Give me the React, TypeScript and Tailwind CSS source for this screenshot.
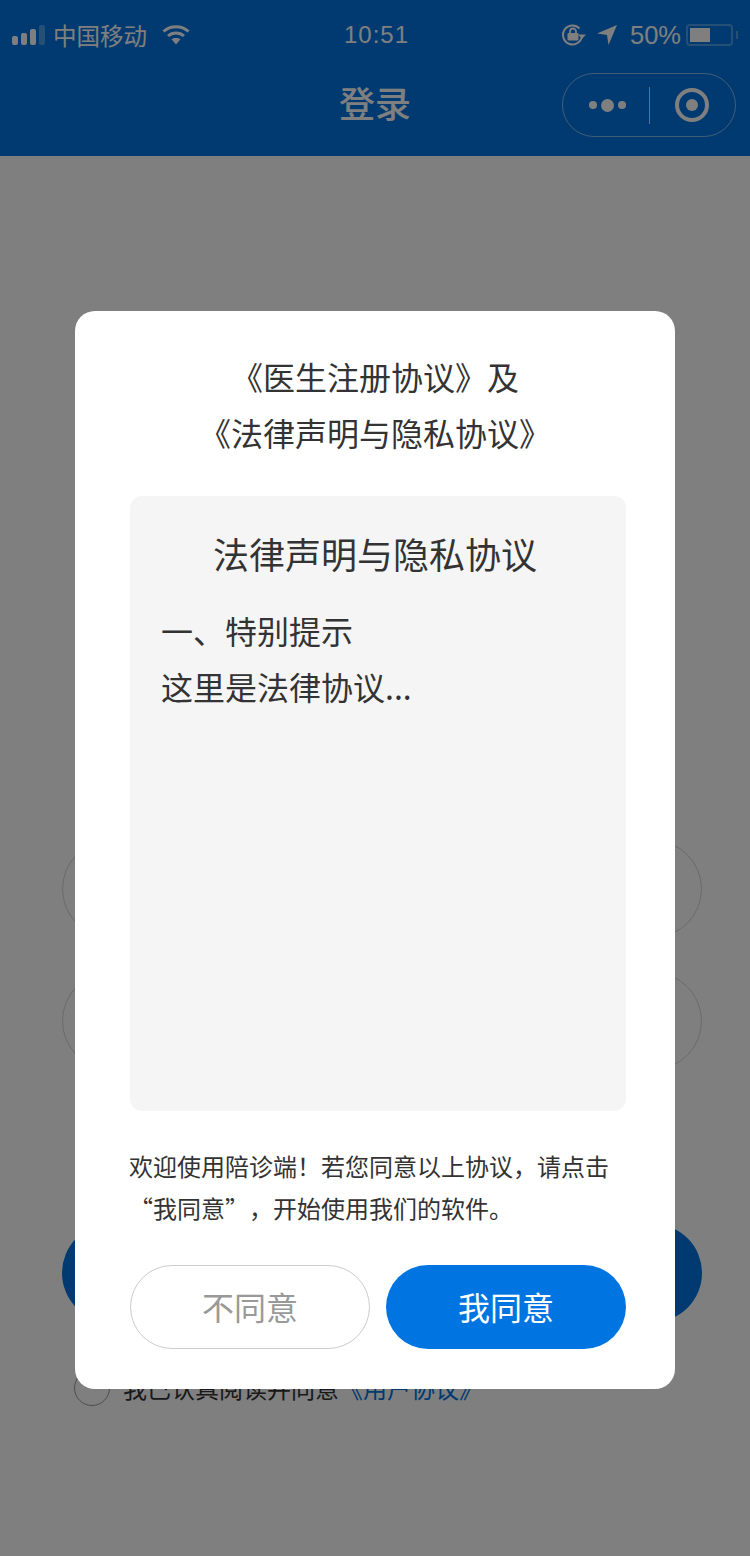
import React from "react";

const cjk = "font-['Noto_Sans_CJK_SC','Liberation_Sans',sans-serif]";

function SignalBars() {
  return (
    <div className="flex items-end gap-[3px]">
      <div className="h-[9px] w-[6px] rounded-[2px] bg-white" />
      <div className="h-[12px] w-[6px] rounded-[2px] bg-white" />
      <div className="h-[16px] w-[6px] rounded-[2px] bg-white" />
      <div className="h-[20px] w-[6px] rounded-[2px] bg-white/30" />
    </div>
  );
}

function WifiIcon() {
  return (
    <svg width="28" height="21" viewBox="0 0 28 21" aria-hidden="true">
      <path d="M1.5 7.5C8.5 1 19.5 1 26.5 7.5" fill="none" stroke="white" strokeWidth="3" />
      <path d="M6 12C10.5 8 17.5 8 22 12" fill="none" stroke="white" strokeWidth="3" />
      <path d="M9.5 15.3C12 13.4 16 13.4 18.5 15.3L14 20.5Z" fill="white" />
    </svg>
  );
}

function RotationLockIcon() {
  return (
    <svg width="24" height="22" viewBox="0 0 24 22" aria-hidden="true">
      <path d="M20 11.5A9.5 9.5 0 1 1 17.5 4.5" fill="none" stroke="white" strokeWidth="2" />
      <path d="M16 10.5H24L20 15Z" fill="white" />
      <rect x="5.5" y="9" width="11" height="7.5" rx="1" fill="white" />
      <path d="M8 9.5V7.5A3 3 0 0 1 14 7.5V9.5" fill="none" stroke="white" strokeWidth="1.8" />
    </svg>
  );
}

function LocationIcon() {
  return (
    <svg width="20" height="20" viewBox="0 0 20 20" aria-hidden="true">
      <path d="M20 0L11.5 20L10 10L0 8.5Z" fill="white" />
    </svg>
  );
}

function Battery() {
  return (
    <div className="flex items-center">
      <div className="flex h-[22px] w-[47px] items-center rounded-[4px] border-2 border-white/30 pl-[2px]">
        <div className="h-[14px] w-[20px] bg-white" />
      </div>
      <div className="ml-[3px] h-[8px] w-[2px] bg-white/30" />
    </div>
  );
}

function Capsule() {
  return (
    <div className="flex h-[64px] w-[174px] items-center rounded-full border border-white/50">
      <div className="flex w-[86px] items-center justify-center gap-[4px] pl-[3px]">
        <div className="h-[8px] w-[8px] rounded-full bg-white" />
        <div className="h-[13px] w-[13px] rounded-full bg-white" />
        <div className="h-[8px] w-[8px] rounded-full bg-white" />
      </div>
      <div className="h-[37px] w-px bg-white/80" />
      <div className="flex flex-1 items-center justify-center pr-[2px]">
        <div className="flex h-[34px] w-[34px] items-center justify-center rounded-full border-[4px] border-white">
          <div className="h-[12px] w-[12px] rounded-full bg-white" />
        </div>
      </div>
    </div>
  );
}

function LoginPage() {
  return (
    <div className="flex h-[1556px] w-[750px] flex-col overflow-hidden bg-white">
      <header className="flex h-[156px] flex-col bg-[#0075e2] text-white">
        <div className="flex h-[69px] items-center justify-between pl-[12px] pr-[12px]">
          <div className="flex w-[250px] items-center">
            <SignalBars />
            <span className={`ml-[8px] text-[23.5px] leading-[28px] ${cjk}`}>中国移动</span>
            <div className="ml-[15px]">
              <WifiIcon />
            </div>
          </div>
          <span className="ml-[3px] text-[24px] leading-[28px] tracking-[1px] font-['Liberation_Sans',sans-serif]">10:51</span>
          <div className="flex w-[250px] items-center justify-end">
            <RotationLockIcon />
            <div className="ml-[11px]">
              <LocationIcon />
            </div>
            <span className="ml-[13px] text-[25.5px] leading-[28px] font-['Liberation_Sans',sans-serif]">50%</span>
            <div className="ml-[5px]">
              <Battery />
            </div>
          </div>
        </div>
        <div className="relative flex h-[71px] items-start justify-center">
          <span className={`pt-[1px] text-[36px] leading-[64px] font-medium ${cjk}`}>登录</span>
          <div className="absolute right-[14px] top-[4px]">
            <Capsule />
          </div>
        </div>
      </header>
      <main className="flex flex-col pl-[62px] pr-[48px] pt-[684px]">
        <div className="h-[98px] rounded-full border border-[#d4d4d4]" />
        <div className="mt-[34px] h-[98px] rounded-full border border-[#d4d4d4]" />
        <button type="button" className="mt-[154px] h-[98px] rounded-full bg-[#0075e2]" />
        <div className="mt-[48px] flex items-center pl-[12px]">
          <div className="h-[36px] w-[36px] rounded-full border border-[#999999]" />
          <span className={`ml-[13px] text-[24px] leading-[36px] text-[#333333] ${cjk}`}>
            我已认真阅读并同意<span className="text-[#0075e2]">《用户协议》</span>
          </span>
        </div>
      </main>
    </div>
  );
}

function AgreementDialog() {
  return (
    <div className="fixed inset-0 flex justify-center bg-black/50 pt-[311px]">
      <div className={`flex h-[1078px] w-[600px] flex-col rounded-[20px] bg-white px-[55px] pt-[37px] text-[#333333] ${cjk}`}>
        <div className="text-center text-[32px] leading-[56px] [text-spacing-trim:space-all]">
          <p>《医生注册协议》及</p>
          <p>《法律声明与隐私协议》</p>
        </div>
        <div className="mt-[36px] h-[615px] w-[496px] rounded-[12px] bg-[#f5f5f5] pl-[31px] pr-[37px] pt-[29px]">
          <h2 className="text-center text-[36px] leading-[56px]">法律声明与隐私协议</h2>
          <p className="mt-[21px] text-[32px] leading-[56px]">一、特别提示</p>
          <p className="text-[32px] leading-[56px]">这里是法律协议...</p>
        </div>
        <p className="-ml-px mt-[34px] w-[490px] text-[24px] leading-[42px] [text-spacing-trim:space-all]">
          {"欢迎使用陪诊端\uFF01若您同意以上协议\uFF0C请点击"}
          <br />
          {"\u201C我同意\u201D\uFF0C开始使用我们的软件。"}
        </p>
        <div className="mt-[36px] flex w-[496px] gap-[16px]">
          <button type="button" className="h-[84px] w-[240px] rounded-full border border-[#cccccc] pb-[3px] text-[32px] text-[#999999]">
            不同意
          </button>
          <button type="button" className="h-[84px] w-[240px] rounded-full bg-[#0075e2] pb-[3px] text-[32px] text-white">
            我同意
          </button>
        </div>
      </div>
    </div>
  );
}

export default function App() {
  return (
    <div className="relative h-[1556px] w-[750px]">
      <LoginPage />
      <AgreementDialog />
    </div>
  );
}
